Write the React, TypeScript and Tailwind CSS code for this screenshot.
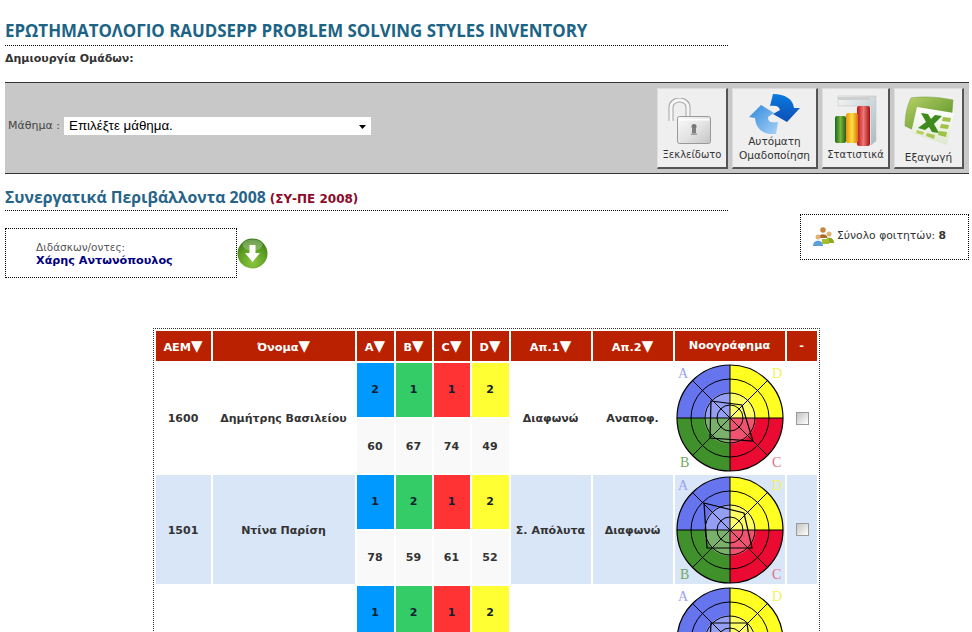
import React from "react";

const font = { fontFamily: '"DejaVu Sans", Verdana, sans-serif' };
const headFont = { fontFamily: '"Open Sans", "DejaVu Sans", sans-serif' };

function LockIcon() {
  return (
    <svg width="43" height="47" viewBox="0 0 43 47">
      <defs>
        <linearGradient id="lockBody" x1="0" y1="0" x2="1" y2="1">
          <stop offset="0" stopColor="#fafafa" />
          <stop offset="0.55" stopColor="#e2e2e2" />
          <stop offset="1" stopColor="#c4c4c4" />
        </linearGradient>
      </defs>
      <path d="M3 23 V9 a8.500 7 0 0 1 17 0 V18" fill="none" stroke="#a4a4a4" strokeWidth="5" />
      <path d="M3 23 V9 a8.500 7 0 0 1 17 0 V18" fill="none" stroke="#f6f6f6" strokeWidth="3" />
      <rect x="9.500" y="18.500" width="33" height="27" rx="2" fill="url(#lockBody)" stroke="#999" />
      <rect x="11" y="21" width="30" height="1.500" fill="#fff" />
      <circle cx="26" cy="28.500" r="2.500" fill="#777" />
      <rect x="24" y="29.500" width="4" height="6" fill="#808080" />
      <rect x="23" y="35.500" width="6" height="1.500" fill="#a0a0a0" />
    </svg>
  );
}

function RefreshIcon() {
  return (
    <svg width="52" height="42" viewBox="0 0 52 42">
      <defs>
        <linearGradient id="arrTop" x1="0" y1="0" x2="0" y2="1">
          <stop offset="0" stopColor="#0a7ae0" />
          <stop offset="1" stopColor="#0d4fb5" />
        </linearGradient>
        <linearGradient id="arrBot" x1="0" y1="0" x2="1" y2="1">
          <stop offset="0" stopColor="#2c86dc" />
          <stop offset="1" stopColor="#a9d2f6" />
        </linearGradient>
      </defs>
      <path d="M24 0 C36 0 44 5 45 14 L51 14 L38 28 L24 20 L31 16 C30 12 27 11 21 12 Z" fill="url(#arrTop)" />
      <path d="M27 40 C14 41 7 35 6 24 L0 23 L12 11 L25 19 L19 23 C19 28 22 29 29 28 Z" fill="url(#arrBot)" />
    </svg>
  );
}

function ChartIcon() {
  return (
    <svg width="44" height="54" viewBox="0 0 44 54">
      <defs>
        <linearGradient id="cGreen" x1="0" y1="0" x2="1" y2="0">
          <stop offset="0" stopColor="#146a24" />
          <stop offset="0.5" stopColor="#7ab636" />
          <stop offset="1" stopColor="#1f5e1a" />
        </linearGradient>
        <linearGradient id="cOrange" x1="0" y1="0" x2="1" y2="0">
          <stop offset="0" stopColor="#ee9010" />
          <stop offset="0.5" stopColor="#ffe040" />
          <stop offset="1" stopColor="#dc7010" />
        </linearGradient>
        <linearGradient id="cRed" x1="0" y1="0" x2="1" y2="0">
          <stop offset="0" stopColor="#b81414" />
          <stop offset="0.5" stopColor="#ee7878" />
          <stop offset="1" stopColor="#a01010" />
        </linearGradient>
        <linearGradient id="cPanel" x1="0" y1="0" x2="1" y2="1">
          <stop offset="0" stopColor="#f4f4f4" />
          <stop offset="1" stopColor="#a9bcc4" />
        </linearGradient>
      </defs>
      <path d="M4 2 L42 2 L42 47 L37 51 L37 12 L4 12 Z" fill="url(#cPanel)" stroke="#bcbcbc" strokeWidth="0.5" />
      <rect x="4" y="3" width="32" height="3" fill="#cfcfcf" />
      <rect x="23" y="12" width="13" height="40" rx="2" fill="url(#cRed)" />
      <rect x="12" y="19" width="12" height="30" rx="2" fill="url(#cOrange)" />
      <rect x="1" y="22" width="11" height="27" rx="2" fill="url(#cGreen)" />
    </svg>
  );
}

function ExcelIcon() {
  return (
    <svg width="52" height="50" viewBox="0 0 52 50">
      <defs>
        <linearGradient id="xlGreen" x1="0" y1="0" x2="1" y2="1">
          <stop offset="0" stopColor="#b8d268" />
          <stop offset="1" stopColor="#4f8a1f" />
        </linearGradient>
        <linearGradient id="xlPage" x1="0" y1="0" x2="0" y2="1">
          <stop offset="0" stopColor="#ffffff" />
          <stop offset="1" stopColor="#dfe7cf" />
        </linearGradient>
      </defs>
      <path d="M8 2 C20 0 36 1 50 4 L49 17 L16 13 L15 36 L2 30 C2 20 4 10 8 2 Z" fill="url(#xlGreen)" stroke="#6f9a3a" strokeWidth="0.5" />
      <path d="M14 11 L51 17 L44 49 L8 37 Z" fill="url(#xlPage)" />
      <path d="M18 17 L25 18 L28 23 L32 19 L39 20 L31 28 L36 37 L29 36 L26 31 L22 34 L15 32 L23 26 Z" fill="#3f8a1c" />
      <path d="M40 21 L48 22 L47 26 L39 25 Z" fill="#9cc246" />
      <path d="M38 28 L46 29 L45 33 L37 32 Z" fill="#9cc246" />
      <path d="M36 35 L44 36 L43 41 L35 39 Z" fill="#9cc246" />
      <path d="M14 34 L21 36 L20 39 L13 37 Z" fill="#b5d060" />
      <path d="M24 37 L32 39 L31 43 L23 40 Z" fill="#a8c650" />
    </svg>
  );
}

function GoIcon() {
  return (
    <svg width="31" height="31" viewBox="0 0 31 31">
      <defs>
        <radialGradient id="goBall" cx="0.5" cy="0.8" r="0.8">
          <stop offset="0" stopColor="#8cc63f" />
          <stop offset="0.6" stopColor="#5c9e22" />
          <stop offset="1" stopColor="#3a7a18" />
        </radialGradient>
      </defs>
      <circle cx="15.500" cy="15.500" r="15" fill="url(#goBall)" />
      <ellipse cx="15.500" cy="7" rx="10" ry="5.500" fill="#fff" opacity="0.25" />
      <path d="M12.500 7 H18.500 V15 H23 L15.500 24 L8 15 H12.500 Z" fill="#fff" />
    </svg>
  );
}

function GroupIcon() {
  return (
    <svg width="21" height="21" viewBox="0 0 21 21">
      <circle cx="10" cy="4" r="2.800" fill="#c8863c" />
      <path d="M5.500 12 C6 7 14 7 14.500 12 Z" fill="#a86a28" />
      <circle cx="16" cy="8" r="2.500" fill="#e2b070" />
      <path d="M12 17 C12 10 21 10 21 17 Z" fill="#8aa81e" />
      <circle cx="5" cy="11" r="2.500" fill="#e2b070" />
      <path d="M0 20 C0 13 10 13 10 20 Z" fill="#5c9ed8" />
      <rect x="9" y="13" width="7" height="5" fill="#a8bc30" />
    </svg>
  );
}

type Pt = [number, number];

function Radar({ poly }: { poly: Pt[] }) {
  const c = 55;
  const d = 37.500;
  const points = poly.map(([x, y]) => `${c + x},${c + y}`).join(" ");
  return (
    <svg width="110" height="109" viewBox="0 0 110 109" className="block overflow-visible">
      <path d={`M${c} ${c} V2 A53 53 0 0 0 2 ${c} Z`} fill="#6674ee" />
      <path d={`M${c} ${c} V2 A53 53 0 0 1 108 ${c} Z`} fill="#ffff22" />
      <path d={`M${c} ${c} H108 A53 53 0 0 1 ${c} 108 Z`} fill="#ea0a32" />
      <path d={`M${c} ${c} V108 A53 53 0 0 1 2 ${c} Z`} fill="#40902c" />
      <circle cx={c} cy={c} r="26" fill="#fff" opacity="0.3" />
      <g fill="none" stroke="#000" strokeWidth="1">
        <circle cx={c} cy={c} r="53" strokeWidth="1.200" />
        <circle cx={c} cy={c} r="39" />
        <circle cx={c} cy={c} r="25" />
        <circle cx={c} cy={c} r="13" />
        <path d={`M2 ${c} H108 M${c} 2 V108`} />
        <path d={`M${c - d} ${c - d} L${c + d} ${c + d} M${c + d} ${c - d} L${c - d} ${c + d}`} />
        <polygon points={points} strokeWidth="1.200" />
      </g>
      <g fontFamily='"Liberation Serif", serif' fontSize="14" fontWeight="400">
        <text x="3" y="15" fill="#9aa2ee">A</text>
        <text x="97" y="15" fill="#f6f060">D</text>
        <text x="5" y="104" fill="#72a862">B</text>
        <text x="97" y="104" fill="#e86a80">C</text>
      </g>
    </svg>
  );
}

const students = [
  {
    aem: "1600", name: "Δημήτρης Βασιλείου", g: ["2", "1", "1", "2"], n: ["60", "67", "74", "49"],
    a1: "Διαφωνώ", a2: "Αναποφ.", h: "h-[54px]",
    poly: [[-19, -17], [12, -13], [23, 23], [-20, 20]] as Pt[],
  },
  {
    aem: "1501", name: "Ντίνα Παρίση", g: ["1", "2", "1", "2"], n: ["78", "59", "61", "52"],
    a1: "Σ. Απόλυτα", a2: "Διαφωνώ", h: "h-[53px]",
    poly: [[-26, -27], [14, -17], [22, 18], [-23, 18]] as Pt[],
  },
  {
    aem: "", name: "", g: ["1", "2", "1", "2"], n: ["", "", "", ""],
    a1: "", a2: "", h: "h-[54px]",
    poly: [[-19, -18], [17, -18], [22, 20], [-21, 19]] as Pt[],
  },
];

const groupColors = ["bg-[#0099ff]", "bg-[#33cc66]", "bg-[#ff3333]", "bg-[#ffff33]"];
const headers = [
  { t: "ΑΕΜ", s: true }, { t: "Όνομα", s: true }, { t: "A", s: true }, { t: "B", s: true }, { t: "C", s: true },
  { t: "D", s: true }, { t: "Απ.1", s: true }, { t: "Απ.2", s: true }, { t: "Νοογράφημα", s: false }, { t: "-", s: false },
];
const widths = ["w-[55px]", "w-[142px]", "w-[37px]", "w-[36px]", "w-[36px]", "w-[37px]", "w-[80px]", "w-[80px]", "w-[110px]", "w-[30px]"];

function ToolButton({ label, icon, cls }: { label: React.ReactNode; icon: React.ReactNode; cls: string }) {
  return (
    <button className={`${cls} h-[81px] flex flex-col items-center bg-[#efefef] border-r-2 border-b-2 border-r-[#555] border-b-[#555] border-l border-t border-l-[#ddd] border-t-[#ddd] leading-[14px] text-[#333] shrink-0`}>
      {icon}
      <span className="text-center whitespace-nowrap">{label}</span>
    </button>
  );
}

export default function App() {
  return (
    <div className="w-[972px] h-[632px] overflow-hidden bg-white text-[#333]" style={font}>
      <div className="px-[5px] pt-[22px]">
        <h1 className="w-[723px] h-[24px] border-b border-dotted border-black text-[16.900px] leading-[18px] font-bold text-[#1c6485] whitespace-nowrap" style={headFont}>
          ΕΡΩΤΗΜΑΤΟΛΟΓΙΟ RAUDSEPP PROBLEM SOLVING STYLES INVENTORY
        </h1>
        <div className="h-[36px] pt-[6px] text-[11px] leading-[14px] font-bold text-[#333]">Δημιουργία Ομάδων:</div>
        <div className="w-[964px] h-[92px] flex items-center justify-between bg-[#c8c8c8] border-y border-y-[#333]">
          <div className="flex items-center pl-[3px] mt-[-4px] text-[11px] text-[#444]">
            <span className="w-[56px] whitespace-nowrap pt-[1px]">Μάθημα :</span>
            <div className="relative w-[307px] h-[18px]">
              <select className="appearance-none w-full h-full bg-white pl-[5px] text-[13.330px] leading-[18px] text-black rounded-none outline-none" style={{ fontFamily: '"Liberation Sans", sans-serif' }}>
                <option>Επιλέξτε μάθημα.</option>
              </select>
              <svg width="7" height="4" viewBox="0 0 7 4" className="absolute right-[5px] top-[8px]">
                <path d="M0 0 H7 L3.500 4 Z" fill="#000" />
              </svg>
            </div>
          </div>
          <div className="flex gap-[4px] pr-[5px]">
            <ToolButton cls="w-[71px] pt-[9px] text-[10px]" label="Ξεκλείδωτο" icon={<div className="h-[50px] pr-[6px]"><LockIcon /></div>} />
            <ToolButton cls="w-[86px] pt-[5px] text-[10.500px]" label={<>Αυτόματη<br />Ομαδοποίηση</>} icon={<div className="h-[40px]"><RefreshIcon /></div>} />
            <ToolButton cls="w-[68px] pt-[5px] text-[10px]" label="Στατιστικά" icon={<div className="h-[54px]"><ChartIcon /></div>} />
            <ToolButton cls="w-[70px] pt-[7px] text-[10.500px]" label="Εξαγωγή" icon={<div className="h-[54px]"><ExcelIcon /></div>} />
          </div>
        </div>
        <div className="w-[723px] h-[37px] pt-[13px] border-b border-dotted border-black whitespace-nowrap leading-[20px]">
          <span className="text-[15.800px] font-bold text-[#26648a]" style={headFont}>Συνεργατικά Περιβάλλοντα 2008</span>
          <span className="text-[12px] font-bold text-[#8b0a2a] ml-[4px]">(ΣΥ-ΠΕ 2008)</span>
        </div>
        <div className="flex justify-between items-start w-[964px]">
          <div className="flex items-center mt-[17px]">
            <div className="w-[232px] h-[50px] border border-dotted border-black pl-[30px] pt-[11px] text-[10.500px] leading-[14px]">
              <div className="text-[#555]">Διδάσκων/οντες:</div>
              <div className="font-bold text-[#000080] text-[11.200px]">Χάρης Αντωνόπουλος</div>
            </div>
            <GoIcon />
          </div>
          <div className="w-[169px] h-[46px] mt-[3px] flex items-center gap-[3px] pl-[12px] pb-[2px] border border-dotted border-black text-[10.800px]">
            <GroupIcon />
            <span className="text-[#333] whitespace-nowrap">Σύνολο φοιτητών: <b className="font-bold">8</b></span>
          </div>
        </div>
      </div>
      <div className="flex justify-center mt-[50px]">
        <table className="border-separate border-spacing-[2px] border border-dotted border-[#333] table-fixed text-[11px] font-bold text-[#333] w-[667px]">
          <thead>
            <tr>
              {headers.map((h, i) => (
                <th key={h.t} className={`${widths[i]} h-[30px] p-0 bg-[#b92100] text-white font-bold text-center whitespace-nowrap text-[11.300px] leading-none`}>
                  {h.t}
                  {h.s && <span className="text-[15px] leading-none">▼</span>}
                </th>
              ))}
            </tr>
          </thead>
          <tbody>
            {students.map((s, i) => {
              const bg = i % 2 === 1 ? "bg-[#d8e6f8]" : "bg-white";
              return (
                <React.Fragment key={i}>
                  <tr>
                    <td rowSpan={2} className={`${bg} p-0 pt-[3px] text-center`}>{s.aem}</td>
                    <td rowSpan={2} className={`${bg} p-0 pt-[3px] text-center whitespace-nowrap`}>{s.name}</td>
                    {s.g.map((v, k) => (
                      <td key={k} className={`${groupColors[k]} p-0 pt-[1px] text-center h-[54px] text-[#123]`}>{v}</td>
                    ))}
                    <td rowSpan={2} className={`${bg} p-0 pt-[3px] text-center whitespace-nowrap`}>{s.a1}</td>
                    <td rowSpan={2} className={`${bg} p-0 pt-[3px] text-center whitespace-nowrap`}>{s.a2}</td>
                    <td rowSpan={2} className={`${bg} p-0 align-top`}><Radar poly={s.poly} /></td>
                    <td rowSpan={2} className={`${bg} p-0`}>
                      <input type="checkbox" className="appearance-none block ml-[9px] w-[13px] h-[13px] border border-[#9a9a9a] bg-gradient-to-br from-[#c4c4c4] to-white" />
                    </td>
                  </tr>
                  <tr>
                    {s.n.map((v, k) => (
                      <td key={k} className={`bg-[#f9f9f9] p-0 pt-[2px] text-center ${s.h}`}>{v}</td>
                    ))}
                  </tr>
                </React.Fragment>
              );
            })}
          </tbody>
        </table>
      </div>
    </div>
  );
}
